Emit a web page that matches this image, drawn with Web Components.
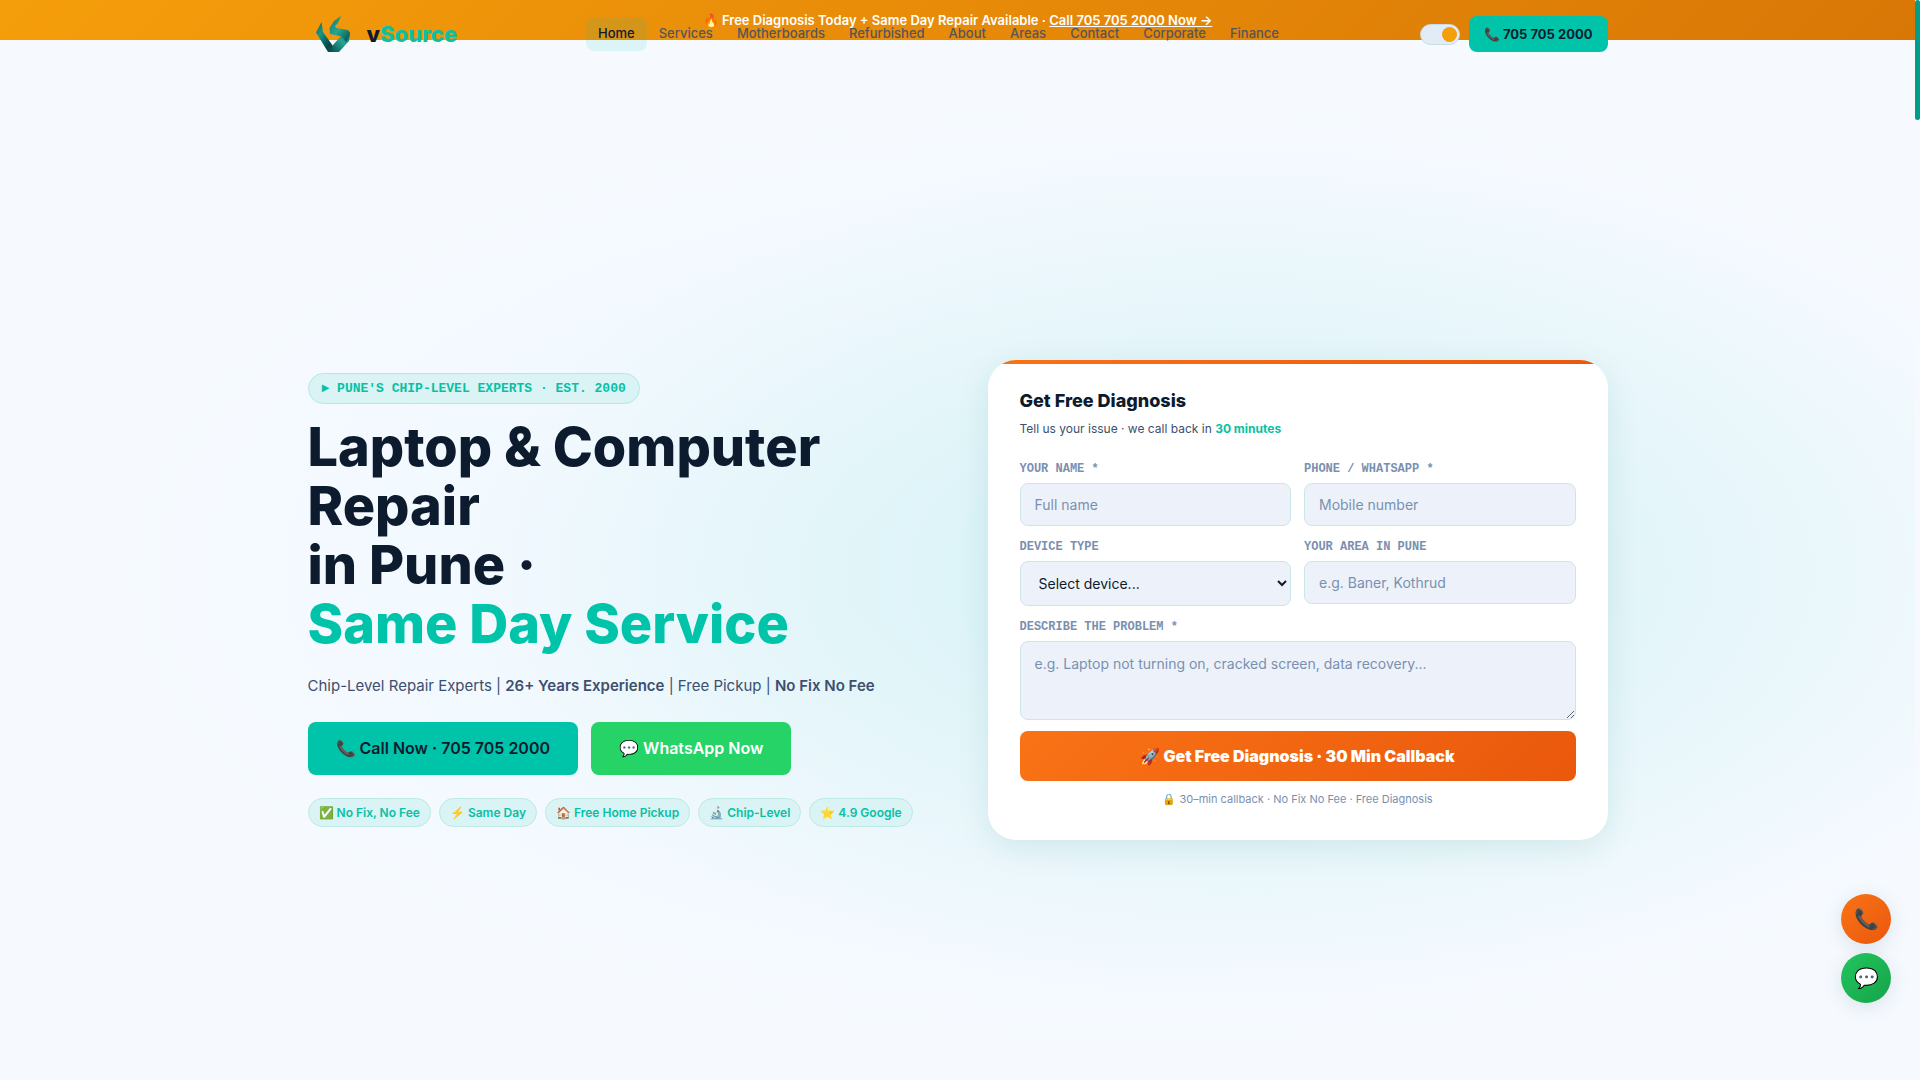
<!DOCTYPE html>
<html lang="en">
<head>
<meta charset="utf-8">
<meta name="viewport" content="width=device-width, initial-scale=1">
<title>vSource</title>
<style>
:root{--teal:#00c4aa;--teal-text:#08c0a4;--ink:#0d1b2e;--body:#3d4f6e;--muted:#7a90b0;--line:#cce6e6;--pill:#daf3f5;--field:#edf2fa;--sans:Inter,"Liberation Sans",sans-serif;--mono:"Liberation Mono",monospace}
body{margin:0;font-family:var(--sans);color:var(--ink);background:#f6faff}
</style>
</head>
<body>
<vs-page></vs-page>
<script>
const define=(name,html)=>customElements.define(name,class extends HTMLElement{
  constructor(){super();const t=document.createElement('template');t.innerHTML=html;this.attachShadow({mode:'open'}).append(t.content.cloneNode(true));}
});

define('vs-logo',`<style>
:host{display:block}
a{display:flex;align-items:center;gap:11px;text-decoration:none;color:#101a2c;font-size:22px;line-height:28px;font-weight:800}
svg{display:block;width:48px;height:40px}
span{color:#0fbfa2}
</style><a href="#"><svg viewBox="0 0 48 40" aria-hidden="true">
<defs><linearGradient id="l" x1="0" y1="0" x2="1" y2="1"><stop offset="0" stop-color="#0b6a66"/><stop offset=".3" stop-color="#1a9585"/><stop offset=".65" stop-color="#064848"/><stop offset="1" stop-color="#0a5f5b"/></linearGradient>
<linearGradient id="r" x1="0" y1="1" x2="1" y2="0"><stop offset="0" stop-color="#075050"/><stop offset=".55" stop-color="#27a692"/><stop offset="1" stop-color="#0b6a65"/></linearGradient>
<linearGradient id="s" x1="0" y1="0" x2="1" y2="1"><stop offset="0" stop-color="#14796f"/><stop offset=".5" stop-color="#27a692"/><stop offset="1" stop-color="#064a4a"/></linearGradient></defs>
<path fill="url(#l)" d="M13.500 8 8 18.500 20 38H31L25 32 15 18Z"/>
<path fill="url(#r)" d="M42 18 41 27 31 38H23L25 31 33 22Z"/>
<path fill="url(#s)" d="M33 2 30 9 27 12 28 14 40 16Q43 19 41 23L38 28 34 22.500 22 20 21.500 14 26 7Z"/>
</svg><div>v<span>Source</span></div></a>`);

define('vs-announce',`<style>
:host{display:block;background:linear-gradient(135deg,#f59e0b,#d97706);color:#fff}
p{margin:0;text-align:center;font-size:13px;line-height:40px;font-weight:600}
a{color:inherit}
</style><p><slot></slot> <a href="#call">Call 705 705 2000 Now →</a></p>`);

define('vs-nav-link',`<style>
:host{display:block}
a{display:block;padding:8px 12px 10px;border-radius:8px;color:#55565a;font-size:13px;line-height:16px;font-weight:500;text-decoration:none}
:host([active]) a{color:#101a2c;background:rgba(0,196,170,.1)}
</style><a href="#"><slot></slot></a>`);

define('vs-toggle',`<style>
:host{display:block}
label{display:block}
input{appearance:none;display:flex;align-items:center;justify-content:flex-end;box-sizing:border-box;margin:0;width:40px;height:21px;padding:0 2px;border:1px solid #c9dbe3;border-radius:11px;background:#e2ecf6}
input::before{content:"";width:15px;height:15px;border-radius:50%;background:#f59e0b}
</style><label><input type="checkbox" role="switch" aria-label="Light theme" checked></label>`);

define('vs-header',`<style>
:host{position:absolute;inset:0 0 auto 0;padding:14px 32px}
.in{max-width:1300px;margin:0 auto;display:flex;align-items:center;justify-content:space-between}
nav{display:flex}
.end{display:flex;align-items:center;gap:9px}
.cta{padding:10px 15px;border-radius:8px;background:var(--teal);color:var(--ink);font-size:13px;line-height:16px;font-weight:700;text-decoration:none}
</style><div class="in"><vs-logo></vs-logo><nav>
<vs-nav-link active>Home</vs-nav-link><vs-nav-link>Services</vs-nav-link><vs-nav-link>Motherboards</vs-nav-link><vs-nav-link>Refurbished</vs-nav-link><vs-nav-link>About</vs-nav-link><vs-nav-link>Areas</vs-nav-link><vs-nav-link>Contact</vs-nav-link><vs-nav-link>Corporate</vs-nav-link><vs-nav-link>Finance</vs-nav-link>
</nav><div class="end"><vs-toggle></vs-toggle><a class="cta" href="#call">📞 705 705 2000</a></div></div>`);

define('vs-pill',`<style>
:host{display:block;padding:6px 10px;border:1px solid #bdeae6;border-radius:20px;background:var(--pill);color:var(--teal-text);font-size:12px;line-height:15px;font-weight:600;white-space:nowrap}
</style><slot></slot>`);

define('vs-button',`<style>
:host{display:block}
a{display:block;padding:16px 28px;border-radius:8px;background:var(--teal);color:var(--ink);font-size:16px;line-height:21px;font-weight:600;text-decoration:none}
:host([whatsapp]) a{background:#25d366;color:#fff}
</style><a href="#"><slot></slot></a>`);

define('vs-intro',`<style>
:host{display:flex;flex-direction:column;align-items:flex-start}
.tag{padding:7px 13px;border:1px solid #b5e8e3;border-radius:20px;background:var(--pill);color:var(--teal-text);font:700 13px/15px var(--mono)}
h1{margin:13px 0 20px;font-size:54px;line-height:59px;font-weight:800}
h1 span{color:var(--teal)}
p{margin:0;color:var(--body);font-size:15px;line-height:26px}
b{font-weight:600}
.row{display:flex;flex-wrap:wrap;gap:13px;margin-top:23px}
.pills{display:flex;flex-wrap:wrap;gap:8px;margin-top:23px}
</style><div class="tag">► PUNE'S CHIP-LEVEL EXPERTS · EST. 2000</div>
<h1>Laptop &amp; Computer Repair<br>in Pune ·<br><span>Same Day Service</span></h1>
<p>Chip-Level Repair Experts | <b>26+ Years Experience</b> | Free Pickup | <b>No Fix No Fee</b></p>
<div class="row"><vs-button>📞 Call Now · 705 705 2000</vs-button><vs-button whatsapp>💬 WhatsApp Now</vs-button></div>
<div class="pills"><vs-pill>✅ No Fix, No Fee</vs-pill><vs-pill>⚡ Same Day</vs-pill><vs-pill>🏠 Free Home Pickup</vs-pill><vs-pill>🔬 Chip-Level</vs-pill><vs-pill>⭐ 4.9 Google</vs-pill></div>`);

define('vs-form',`<style>
:host{display:block;overflow:hidden;border-radius:28px;background:#fff;box-shadow:0 8px 32px rgba(0,120,110,.11)}
.bar{height:4px;background:linear-gradient(90deg,#f97316,#ea580c)}
form{padding:24px 32px 31px}
h2{margin:0;font-size:18px;line-height:26px;font-weight:800}
.sub{margin:4px 0 22px;color:var(--body);font-size:12px;line-height:22px}
.sub b{color:var(--teal-text);font-weight:700}
.grid{display:grid;grid-template-columns:1fr 1fr;gap:14px 13px;align-items:start}
.f{display:flex;flex-direction:column;gap:7px}
.wide{grid-column:1/-1}
label{color:var(--muted);font:700 12px/14px var(--mono)}
input,select,textarea{box-sizing:border-box;width:100%;height:43px;margin:0;padding:0 14px;border:1px solid var(--line);border-radius:8px;background:var(--field);color:var(--ink);font:400 14px/20px var(--sans)}
select{height:45px}
textarea{display:block;height:79px;padding:12px 14px}
::placeholder{color:var(--muted)}
button{width:100%;height:50px;margin:11px 0 0;border:0;border-radius:8px;background:linear-gradient(135deg,#f97316,#ea580c);color:#fff;font:900 16px/20px var(--sans)}
.note{margin:8px 0 0;text-align:center;color:var(--muted);font-size:11px;line-height:20px}
</style><div class="bar"></div><form>
<h2>Get Free Diagnosis</h2><p class="sub">Tell us your issue · we call back in <b>30 minutes</b></p>
<div class="grid">
<div class="f"><label for="n">YOUR NAME *</label><input id="n" placeholder="Full name"></div>
<div class="f"><label for="p">PHONE / WHATSAPP *</label><input id="p" type="tel" placeholder="Mobile number"></div>
<div class="f"><label for="d">DEVICE TYPE</label><select id="d"><option>Select device...</option></select></div>
<div class="f"><label for="a">YOUR AREA IN PUNE</label><input id="a" placeholder="e.g. Baner, Kothrud"></div>
<div class="f wide"><label for="t">DESCRIBE THE PROBLEM *</label><textarea id="t" placeholder="e.g. Laptop not turning on, cracked screen, data recovery..."></textarea></div>
</div>
<button type="button">🚀 Get Free Diagnosis · 30 Min Callback</button>
<p class="note">🔒 30–min callback · No Fix No Fee · Free Diagnosis</p></form>`);

define('vs-fab',`<style>
:host{display:block}
a{display:flex;align-items:center;justify-content:center;width:50px;height:50px;border-radius:50%;background:linear-gradient(135deg,#f97316,#ea580c);box-shadow:0 4px 20px rgba(20,60,100,.13);font-size:20px;line-height:24px;text-decoration:none;color:#fff}
:host([whatsapp]) a{background:linear-gradient(135deg,#22c55e,#16a34a)}
</style><a href="#"><slot></slot></a>`);

define('vs-page',`<style>
:host{display:flex;min-height:100vh;overflow:hidden;background:#f6faff}
main{position:relative;flex:1;display:flex;flex-direction:column;background:radial-gradient(ellipse 42% 40% at 66% 53%,rgba(0,190,150,.1),transparent),radial-gradient(ellipse 54% 44% at 60% 53%,rgba(140,225,250,.12),transparent)}
.hero{flex:1;display:flex;align-items:center;padding:160px 32px 80px}
.cols{flex:1;max-width:1300px;margin:0 auto;display:grid;grid-template-columns:1fr 1fr;gap:60px;align-items:center}
.fabs{position:fixed;right:29px;bottom:77px;display:flex;flex-direction:column;gap:9px}
.rail{flex:none;width:5px}
.rail i{display:block;height:120px;border-radius:3px;background:#009e88}
</style><main><vs-announce>🔥 Free Diagnosis Today + Same Day Repair Available ·</vs-announce>
<vs-header></vs-header>
<section class="hero"><div class="cols"><vs-intro></vs-intro><vs-form></vs-form></div></section>
</main><div class="rail"><i></i></div>
<div class="fabs"><vs-fab>📞</vs-fab><vs-fab whatsapp>💬</vs-fab></div>`);
</script>
</body>
</html>
